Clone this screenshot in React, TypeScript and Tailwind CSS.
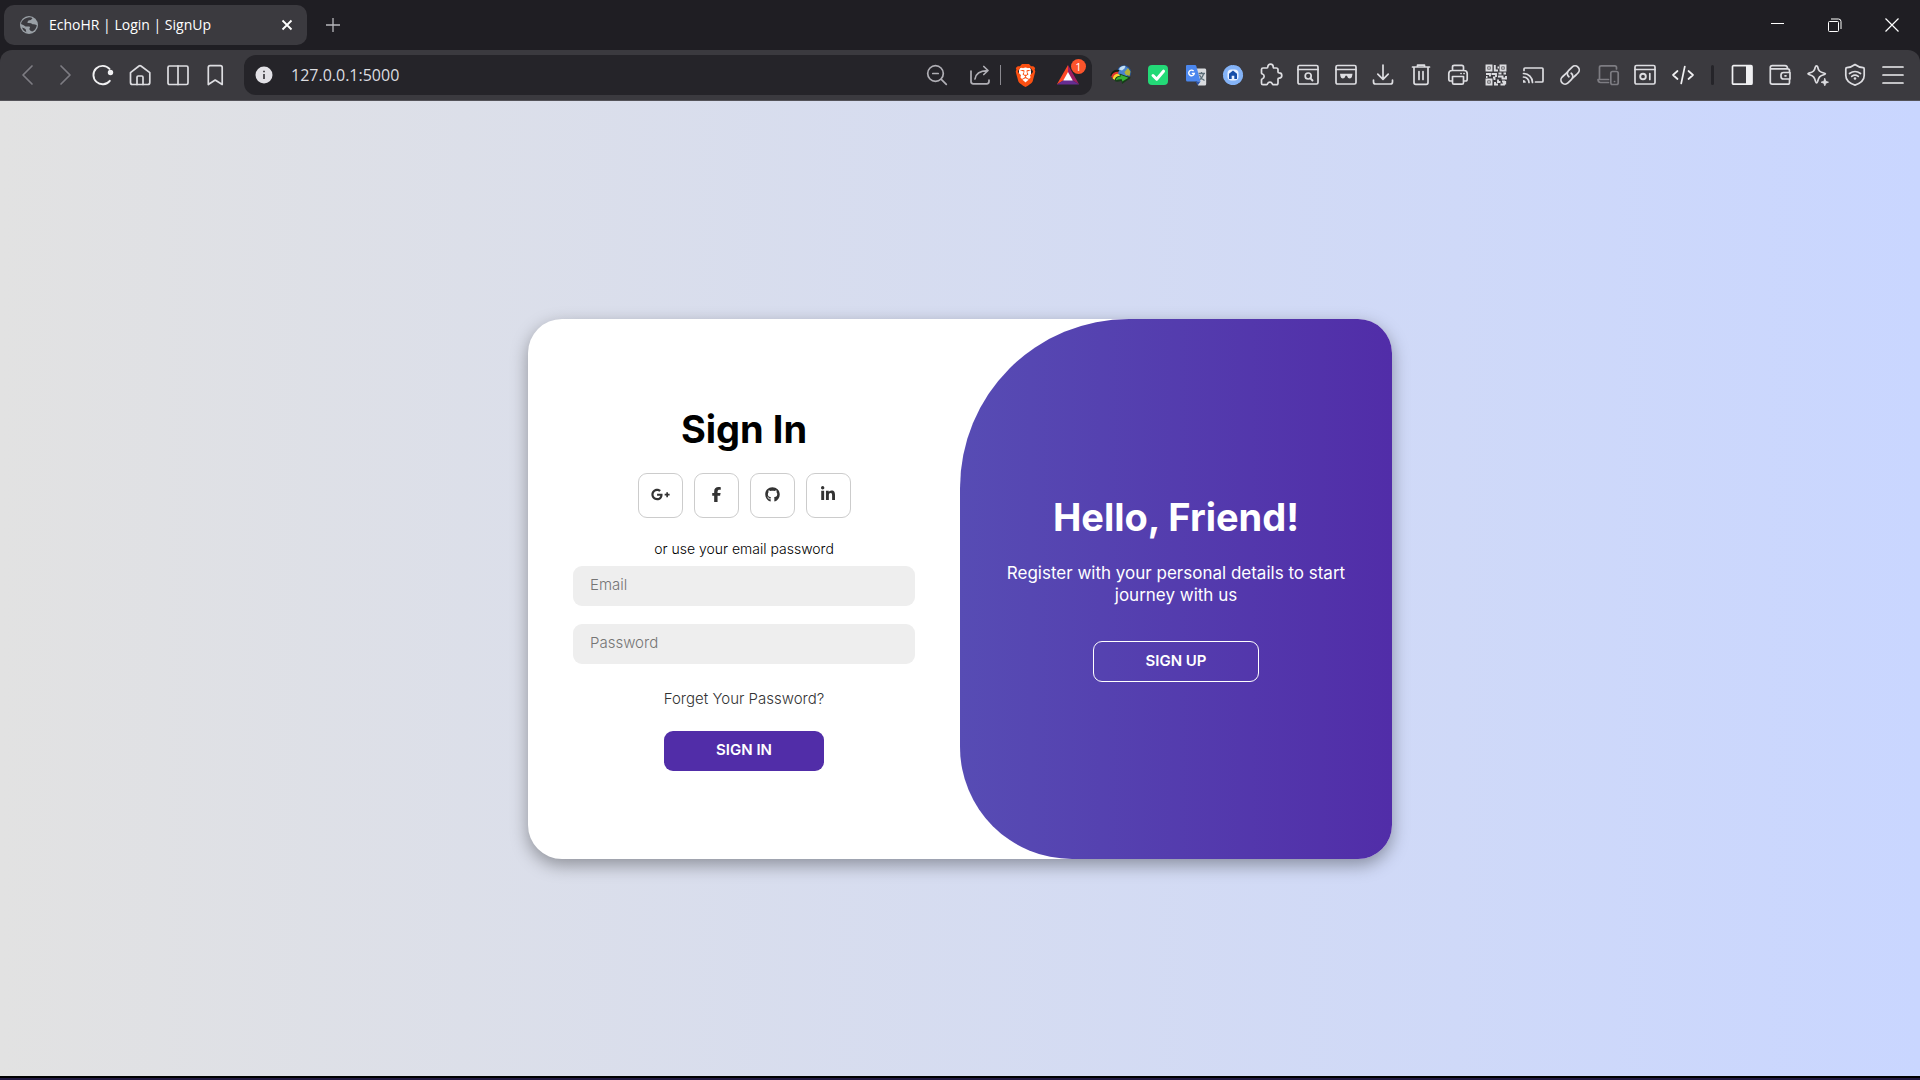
import type { ReactNode } from "react";
import { FaBrave, FaFacebookF, FaGithub, FaGooglePlusG, FaLinkedinIn } from "react-icons/fa6";

function Glyph({ children, className = "text-[#dddde1]" }: { children: ReactNode; className?: string }) {
  return (
    <svg
      viewBox="0 0 24 24"
      className={`size-6 ${className}`}
      fill="none"
      stroke="currentColor"
      strokeWidth="1.7"
      strokeLinecap="round"
      strokeLinejoin="round"
      aria-hidden="true"
    >
      {children}
    </svg>
  );
}

type Tool = { label: string; icon: ReactNode };

function ToolGroup({ tools }: { tools: Tool[] }) {
  return (
    <>
      {tools.map((tool) => (
        <button key={tool.label} type="button" aria-label={tool.label} className="size-6 shrink-0">
          {tool.icon}
        </button>
      ))}
    </>
  );
}

const navigation: Tool[] = [
  { label: "Back", icon: <Glyph className="text-[#7d7c82]"><path d="M16 3 7 12l9 9" /></Glyph> },
  { label: "Forward", icon: <Glyph className="text-[#7d7c82]"><path d="m8 3 9 9-9 9" /></Glyph> },
  {
    label: "Reload",
    icon: (
      <Glyph className="text-[#f0f0f2]">
        <path strokeWidth="1.9" d="M18.500 5.900A9.200 9.200 0 1 0 18.800 17.800" />
        <circle cx="19.500" cy="9.500" r="2.700" fill="currentColor" stroke="none" />
      </Glyph>
    ),
  },
  {
    label: "Home",
    icon: (
      <Glyph>
        <path d="M2.500 9.600v9.900q0 2 2 2H9v-7.300q0-1.200 1.200-1.200h3.600q1.200 0 1.200 1.200v7.300h4.800q2 0 2-2V9.600L13 3q-1-.7-2 0Z" />
        <path d="M9 21.500h6" />
      </Glyph>
    ),
  },
  {
    label: "Split view",
    icon: <Glyph><rect x="2" y="3" width="20" height="18.500" rx="1.500" /><path d="M12 3v18.500" /></Glyph>,
  },
  {
    label: "Bookmark",
    icon: <Glyph><path d="M5.300 4.500q0-1.800 1.800-1.800h10.300q1.800 0 1.800 1.800v17L12.200 17l-6.900 4.500Z" /></Glyph>,
  },
];

const extensions: Tool[] = [
  {
    label: "Download manager",
    icon: (
      <svg viewBox="0 0 24 24" className="size-6" aria-hidden="true">
        <circle cx="15" cy="9.500" r="7.200" fill="#27518f" />
        <circle cx="14.500" cy="8.500" r="5.500" fill="#4a83cf" />
        <path d="M11 4.500q3-2.500 5.500-1.500l-1 2.500-2.500 2-3-1Z" fill="#c5e0f2" />
        <path d="M15.500 9 19 5l2.500 3.500-1 4.500-4-1.500Z" fill="#b3b03a" />
        <path d="M1.300 12.500Q3 6 10.500 7L9 9.500q-3.500.5-4.500 6Z" fill="#122015" />
        <path d="M2.200 13.800q1.500-5.300 7.500-5l-1 2.200q-3 .5-4.500 4.500Z" fill="#e3342c" />
        <path d="M3.700 15.800q1-5 5.500-5l2.500 2.500-4.500 4.200Z" fill="#f5d832" />
        <path d="M5.700 18q0-4.800 5.300-5.200l-.5-2.300L22 14.700l-9 6.300-.5-3.300Q8 19.500 5.700 18Z" fill="#163d18" />
        <path d="M6.800 17.200q.4-3.400 5-3.700l-.4-1.800 8.100 3-6.200 3.800-.5-2.300Q9 16 6.800 17.200Z" fill="#37b437" />
      </svg>
    ),
  },
  {
    label: "Checker",
    icon: (
      <svg viewBox="0 0 24 24" className="size-6" aria-hidden="true">
        <rect x="2" y="2" width="20" height="20" rx="4" fill="#23d977" />
        <path d="m7 12.500 3.700 3.700 6.800-8" fill="none" stroke="#fff" strokeWidth="3" strokeLinecap="round" strokeLinejoin="round" />
      </svg>
    ),
  },
  {
    label: "Translate",
    icon: (
      <svg viewBox="0 0 24 24" className="size-6" aria-hidden="true">
        <path d="M11 5.500h10q1.200 0 1.200 1.500v14q0 1.500-1.500 1.500H14Z" fill="#d9dbdf" />
        <path d="M14.500 10.500h6.500M17.500 9v1.500M19.700 10.500q-1.500 5-4.700 6.500M15.500 12q1.500 3.500 5 5.500" fill="none" stroke="#5c6e78" strokeWidth="1.300" />
        <path d="M3 2h8q1 0 1.300 1l4.200 15.500h-13Q2 18.500 2 17V3q0-1 1-1Z" fill="#4b87ee" />
        <path d="M11.500 18.500h5l-2.700 3.800Z" fill="#2d54a8" />
        <path d="M9.600 8A2.800 2.800 0 1 0 10.300 10.400H7.800" fill="none" stroke="#fff" strokeWidth="1.400" />
      </svg>
    ),
  },
  {
    label: "Home badge",
    icon: (
      <svg viewBox="0 0 24 24" className="size-6" aria-hidden="true">
        <circle cx="12" cy="12" r="8.800" fill="#84b3f7" stroke="#84b3f7" strokeWidth="2.600" strokeDasharray="3 1.600" strokeLinecap="round" />
        <circle cx="12" cy="12" r="8.800" fill="#84b3f7" />
        <rect x="6.500" y="6.500" width="11" height="11" rx="4" fill="#e9f1ff" />
        <path d="M8 12.200v-1.500l4-3.200 4 3.200v5.300h-2.700v-3.200h-2.600V16H8Z" fill="#174ea8" />
      </svg>
    ),
  },
  {
    label: "Extensions",
    icon: (
      <Glyph>
        <path d="M4 5h4q.8 0 .8-1.200a2.700 2.700 0 0 1 5.400 0Q14.200 5 15 5h2.300Q19 5 19 6.700V9q0 .8 1.200.9a2.600 2.600 0 0 1 0 5.200q-1.200.1-1.200.9v4q0 1.700-1.700 1.700H14q-.6 0-.8-1a2.500 2.500 0 0 0-4.600 0q-.2 1-.9 1H4q-1.500 0-1.500-1.500v-3.400q0-.8 1-1.100a2.500 2.500 0 0 0 0-4.700q-1-.3-1-1.100V6.500Q2.500 5 4 5Z" />
      </Glyph>
    ),
  },
  {
    label: "Search page",
    icon: (
      <Glyph>
        <rect x="2" y="2.500" width="20" height="18.500" rx="1.500" />
        <path d="M2 6.500h20" />
        <circle cx="12.200" cy="13" r="3" />
        <path strokeWidth="1.900" d="m14.500 15.300 2 2.200" />
      </Glyph>
    ),
  },
  {
    label: "Private window",
    icon: (
      <Glyph>
        <rect x="2" y="2.500" width="20" height="18.500" rx="1.500" />
        <path d="M2 6.500h20" />
        <path d="M6 10.800h12.500l-.5 2.700q-.5 2-2.300 2-2 0-2.800-2.800h-1.300q-.8 2.800-2.800 2.800-1.800 0-2.300-2Z" fill="currentColor" stroke="none" />
      </Glyph>
    ),
  },
  {
    label: "Downloads",
    icon: <Glyph><path d="M12 2v14M6.800 11.200 12 16.400l5.200-5.200M2.500 17v2q0 2 2 2h15q2 0 2-2v-2" /></Glyph>,
  },
  {
    label: "Clear data",
    icon: (
      <Glyph>
        <path d="M3.500 4h17M8.500 3.500V2.200h7v1.300M5 4.500v15q0 1.800 1.800 1.800h10.400q1.800 0 1.800-1.800v-15M10 8.500v8M14 8.500v8" />
      </Glyph>
    ),
  },
  {
    label: "Print",
    icon: (
      <Glyph>
        <path d="M6.500 7.500V4q0-1.700 1.700-1.700h7.600q1.700 0 1.700 1.700v3.500M6 18H4.500Q2.800 18 2.800 16.300V10.500Q2.800 7.500 6 7.500h12q3.200 0 3.200 3v5.800q0 1.700-1.700 1.700H18" />
        <path d="M6.500 13.500h11v6.200q0 1.500-1.500 1.500H8q-1.500 0-1.500-1.500ZM15 10.500h.1M18 10.500h.1" />
      </Glyph>
    ),
  },
  {
    label: "QR code",
    icon: (
      <Glyph>
        <g strokeWidth="1.900" strokeLinecap="butt" strokeLinejoin="miter">
          <path d="M2.500 2.500h5v5h-5ZM16.500 2.500h5v5h-5ZM2.500 16.500h5v5h-5Z" />
          <path d="M4.300 5h1.400M18.300 5h1.400M4.300 19h1.400M10.800 2v5.500H14M13.500 4.500h1.500M2 11h4v2.500M7.500 11h4.500v3M2 14h1.500M9 14.500h1.500V17M14.500 10.500h3M19.500 10.500H22M14 13.500h4.500v2H22V13M11 19v2.500h3M14 16.500v2.500h2.500M18 18.500h2v3h-3.500M21.200 18v3.500" />
        </g>
      </Glyph>
    ),
  },
  {
    label: "Cast",
    icon: (
      <Glyph>
        <path d="M3 7.500V6q0-1 1-1h17q1 0 1 1v12q0 1-1 1h-6.500M2.500 10.500a9 9 0 0 1 9 9M2.500 14a5.500 5.500 0 0 1 5.500 5.500" />
        <path d="M2 17a2.800 2.800 0 0 1 2.800 2.800H2Z" fill="currentColor" stroke="none" />
      </Glyph>
    ),
  },
  {
    label: "Copy link",
    icon: (
      <Glyph>
        <path d="M14.500 15.200 18 12q.5-.4 2-2a4.100 4.100 0 0 0-5.900-5.900l-3.600 3.500a4.100 4.100 0 0 0 .4 6.200" />
        <path d="M9.500 9.200 4.200 14a4.100 4.100 0 0 0 5.800 5.900l3.600-3.500a4.100 4.100 0 0 0-.4-6.200" />
      </Glyph>
    ),
  },
  {
    label: "Send to device",
    icon: (
      <Glyph className="text-[#7d7c82]">
        <path d="M3.500 15.500v-11q0-1.700 1.700-1.700h13.600q1.700 0 1.700 1.700V6M2 16.500h10.500M12.500 19.500h-8Q2 19.500 2 16.500" />
        <rect x="14.800" y="8.500" width="7.400" height="13" rx="1.700" />
        <path d="M18.500 18.500h.1" />
      </Glyph>
    ),
  },
  {
    label: "Task manager",
    icon: (
      <Glyph>
        <rect x="2" y="2.500" width="20" height="18.500" rx="1.500" />
        <path d="M2 6.500h20M16.800 10.500v6" />
        <circle cx="10" cy="13.500" r="2.800" strokeWidth="1.900" />
      </Glyph>
    ),
  },
  {
    label: "Developer tools",
    icon: <Glyph className="text-[#f0f0f2]"><path d="M6.500 8 2 12l4.500 4M17.500 8l4.500 4-4.500 4M13.800 3.500l-3.600 17" /></Glyph>,
  },
];

const panels: Tool[] = [
  {
    label: "Sidebar",
    icon: (
      <Glyph className="text-[#f0f0f2]">
        <rect x="2.500" y="2.700" width="19.500" height="18.500" rx="1" />
        <path d="M16 2.700h6v18.500h-6Z" fill="currentColor" stroke="none" />
      </Glyph>
    ),
  },
  {
    label: "Wallet",
    icon: (
      <Glyph>
        <path d="M21.500 9V7.500q0-1.700-1.700-1.700H2.500M19.500 5.500q0-2.800-2.500-2.800H4.200Q2.300 2.700 2.300 4.500v14.800q0 1.900 1.900 1.900h15.600q1.700 0 1.700-1.700V17M22 9.500h-6.500q-2.500 0-2.500 2.500v1.500q0 2.500 2.500 2.500H22ZM17 12.800h1" />
      </Glyph>
    ),
  },
  {
    label: "Assistant",
    icon: (
      <Glyph>
        <path d="M10.500 2.800q.9 0 1.100.9c1 4.300 1.700 5 6.800 6.500q2 .6 0 1.300c-5 1.600-5.500 2.200-6.800 7q-1 3-2 0c-1.300-4.800-2-5.400-6.600-7q-2-.7 0-1.400c4.800-1.400 5.300-2 6.400-6.400q.2-.9 1.100-.9Z" />
        <path d="m18.800 15.500 1 2.700 2.700 1-2.700 1-1 2.600-1-2.600-2.700-1 2.700-1Z" fill="currentColor" strokeWidth=".8" />
      </Glyph>
    ),
  },
  {
    label: "VPN",
    icon: (
      <Glyph>
        <path d="M12 1.500q3.500 2.700 8.200 3.200 1 .1 1 1.200v6.600q0 6.500-9.200 9.600-9.200-3.100-9.200-9.600V5.900q0-1.100 1-1.200Q8.500 4.200 12 1.500Z" />
        <path d="M6.500 10.500q5.500-4 11 0M8.700 13.400q3.300-2.400 6.600 0" />
        <circle cx="12" cy="15.500" r="1.300" fill="currentColor" stroke="none" />
      </Glyph>
    ),
  },
  { label: "Menu", icon: <Glyph className="text-[#f0f0f2]"><path d="M2 4h20M2 12h20M2 20h20" /></Glyph> },
];

function TabStrip() {
  return (
    <div className="flex h-[50px] items-stretch bg-[#1f1e23]">
      <div className="mt-[5px] ml-1 flex h-10 w-[303px] items-center rounded-[10px] bg-[#3b3a3f] pr-[10px] pl-[15px] text-white">
        <svg viewBox="0 0 20 20" className="size-5 shrink-0" aria-hidden="true">
          <circle cx="10" cy="10" r="9" fill="#9aa0a6" />
          <path d="M9 2.500q3-.5 4.500.8-1.200 2.200-4 2.200-1.300 1-1 2.600 3.500-.5 5 1.200 2-.5 4.300 1-.5 4.500-4.600 6.300-2-.6-3-2.600 1.500-1.500.3-2.600H6.600Q5 10.500 2 9q.5-5 7-6.500ZM3 12.500q2.500.3 4 2.200-.5 1.800.7 2.600Q4 16 3 12.500Z" fill="#3b3a3f" />
        </svg>
        <span className="ml-[10px] flex-1 truncate text-sm">EchoHR | Login | SignUp</span>
        <button type="button" aria-label="Close tab" className="grid size-5 place-items-center">
          <svg viewBox="0 0 12 12" className="size-3" fill="none" stroke="currentColor" strokeWidth="1.800" aria-hidden="true">
            <path d="m1.500 1.500 9 9M10.500 1.500l-9 9" />
          </svg>
        </button>
      </div>
      <button type="button" aria-label="New tab" className="ml-4 grid w-5 place-items-center text-[#b8b8bc]">
        <svg viewBox="0 0 14 14" className="size-[14px]" fill="none" stroke="currentColor" strokeWidth="1.300" aria-hidden="true">
          <path d="M7 0v14M0 7h14" />
        </svg>
      </button>
      <div className="ml-auto flex text-white">
        <button type="button" aria-label="Minimize" className="grid w-[57px] place-items-center">
          <svg viewBox="0 0 14 14" className="size-[14px]" stroke="currentColor" aria-hidden="true"><path d="M0 5.500h13" /></svg>
        </button>
        <button type="button" aria-label="Restore" className="grid w-[57px] place-items-center">
          <svg viewBox="0 0 14 14" className="size-[14px]" fill="none" stroke="currentColor" aria-hidden="true">
            <rect x=".5" y="3.500" width="10" height="10" rx="1" />
            <path d="M3 1h7.500q2.500 0 2.500 2.500V11" />
          </svg>
        </button>
        <button type="button" aria-label="Close window" className="grid w-[57px] place-items-center">
          <svg viewBox="0 0 14 14" className="size-[14px]" stroke="currentColor" strokeWidth="1.200" aria-hidden="true">
            <path d="m.5.500 13 13M13.500.500l-13 13" />
          </svg>
        </button>
      </div>
    </div>
  );
}

function AddressBar() {
  return (
    <div className="mx-[17px] flex h-10 flex-1 items-center rounded-xl bg-[#252429] pr-3 pl-[11px]">
      <svg viewBox="0 0 18 18" className="size-[18px] shrink-0" aria-hidden="true">
        <circle cx="9" cy="9" r="8.500" fill="#e2e1e6" />
        <path d="M9 8v5M9 4.800v1.500" stroke="#3b3a3f" strokeWidth="1.700" />
      </svg>
      <input
        aria-label="Address"
        defaultValue="127.0.0.1:5000"
        className="ml-[18px] min-w-0 flex-1 bg-transparent text-base text-[#dcdce0] outline-none"
      />
      <div className="flex items-center">
        <button type="button" aria-label="Zoom">
          <Glyph className="text-[#b0afb5]">
            <circle cx="10.500" cy="10.500" r="7.800" />
            <path d="m16.300 16.300 5 5M7.800 10.500h5.400" />
          </Glyph>
        </button>
        <button type="button" aria-label="Share" className="ml-[19px]">
          <Glyph className="text-[#b0afb5]">
            <path d="M3 8v10.500q0 2.300 2.300 2.300h13.400q2.300 0 2.300-2.300V17M7 16q1-8 12.500-8.500M15.800 3.500l4.200 4-4.200 4" />
          </Glyph>
        </button>
        <span className="ml-2 h-5 w-px bg-[#8a898f]" />
        <button type="button" aria-label="Shields" className="relative ml-3 grid size-6 place-items-center">
          <span className="absolute h-4 w-3 rounded bg-white" />
          <FaBrave className="relative size-[23px] text-[#fb5012]" />
        </button>
        <button type="button" aria-label="Rewards, 1 notification" className="relative ml-[19px] size-6">
          <svg viewBox="0 0 24 24" className="size-6" aria-hidden="true">
            <path d="M12 2 .800 21.500 8 17l4-7Z" fill="#ff4724" />
            <path d="m12 2 11.200 19.500L16 17l-4-7Z" fill="#9e1f63" />
            <path d="M.800 21.500h22.400L16 17H8Z" fill="#662d91" />
            <path d="m12 9-4.800 8.500h9.600Z" fill="#fff" />
          </svg>
          <span className="absolute -top-1 left-[15px] grid size-[15px] place-items-center rounded-full bg-[#fb542b] text-[11px] leading-none text-white">
            1
          </span>
        </button>
      </div>
    </div>
  );
}

function Toolbar() {
  return (
    <div className="bg-[#1f1e23]">
      <div className="flex h-[51px] items-center rounded-t-xl border-b border-[#545359] bg-[#3b3a3f] pr-[15px] pl-4">
        <nav aria-label="Navigation" className="flex w-[211px] justify-between">
          <ToolGroup tools={navigation} />
        </nav>
        <AddressBar />
        <div className="flex w-[586px] justify-between">
          <ToolGroup tools={extensions} />
        </div>
        <span className="mx-4 h-5 w-[3px] rounded bg-[#252429]" />
        <div className="flex w-[175px] justify-between">
          <ToolGroup tools={panels} />
        </div>
      </div>
    </div>
  );
}

const socials = [
  { label: "Google Plus", icon: <FaGooglePlusG className="size-[19px]" /> },
  { label: "Facebook", icon: <FaFacebookF className="size-[15px]" /> },
  { label: "GitHub", icon: <FaGithub className="size-[15px]" /> },
  { label: "LinkedIn", icon: <FaLinkedinIn className="size-4" /> },
];

function SignInForm() {
  return (
    <form className="flex w-1/2 flex-col items-center justify-center px-[45px]" onSubmit={(e) => e.preventDefault()}>
      <h1 className="text-[38px] leading-[44px] font-bold text-black">Sign In</h1>
      <div className="my-[22px] flex gap-[11px]">
        {socials.map((s) => (
          <a
            key={s.label}
            href="#"
            aria-label={s.label}
            className="grid size-[45px] place-items-center rounded-[9px] border border-[#ccc] pb-0.5 text-[#333]"
          >
            {s.icon}
          </a>
        ))}
      </div>
      <span className="text-sm leading-[18px] font-light text-black">or use your email password</span>
      <input
        type="email"
        aria-label="Email"
        placeholder="Email"
        className="mt-2 h-10 w-full rounded-[9px] bg-[#eee] px-[17px] pb-0.5 text-[15px] font-light text-[#333] outline-none placeholder:text-[#757575]"
      />
      <input
        type="password"
        aria-label="Password"
        placeholder="Password"
        className="mt-[18px] h-10 w-full rounded-[9px] bg-[#eee] px-[17px] pb-0.5 text-[15px] font-light text-[#333] outline-none placeholder:text-[#757575]"
      />
      <a href="#" className="mt-[26px] text-[15px] leading-[18px] font-light text-[#333]">
        Forget Your Password?
      </a>
      <button type="submit" className="mt-[23px] h-10 w-40 rounded-[9px] bg-[#512da8] text-[15px] font-semibold text-white">
        SIGN IN
      </button>
    </form>
  );
}

function WelcomePanel() {
  return (
    <section className="flex w-1/2 flex-col items-center justify-center rounded-tl-[169px] rounded-bl-[112px] bg-linear-to-r/srgb from-[#574cb4] to-[#512da8] px-[34px] text-center text-white">
      <h1 className="text-[38px] leading-[44px] font-bold">Hello, Friend!</h1>
      <p className="my-[23px] text-[17px] leading-[22px]">Register with your personal details to start journey with us</p>
      <button type="button" className="mt-3 h-[41px] w-[166px] rounded-[9px] border border-white text-[15px] font-semibold">
        SIGN UP
      </button>
    </section>
  );
}

export default function App() {
  return (
    <div className="flex min-h-screen flex-col">
      <header className="font-['Open_Sans',sans-serif]">
        <TabStrip />
        <Toolbar />
      </header>
      <main className="flex flex-1 items-center justify-center bg-linear-to-r/srgb from-[#e2e2e2] to-[#c9d6ff] font-['Inter',sans-serif]">
        <div className="flex min-h-[540px] w-full max-w-[864px] overflow-hidden rounded-[34px] bg-white shadow-[0_6px_17px_rgba(0,0,0,0.35)]">
          <SignInForm />
          <WelcomePanel />
        </div>
      </main>
      <div className="h-1 border-t-2 border-black bg-[#201840]" />
    </div>
  );
}
